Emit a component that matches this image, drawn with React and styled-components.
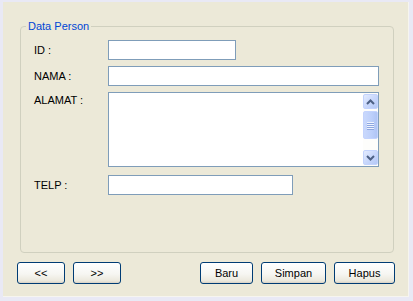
import React from "react";
import styled, { createGlobalStyle } from "styled-components";

const Global = createGlobalStyle`
  html, body { margin: 0; padding: 0; }
  body {
    background: #e9e9f5;
    font-family: "Liberation Sans", Arial, sans-serif;
    font-size: 11px;
    color: #000;
    width: 413px;
    height: 301px;
    overflow: hidden;
  }
`;

const Frame = styled.div`
  padding: 2px 4px 4px 3px;
  width: 413px;
  height: 301px;
  box-sizing: border-box;
`;

const Panel = styled.div`
  box-sizing: border-box;
  height: 295px;
  background: #ece9d8;
  border-right: 1px solid #f6f5ef;
  border-bottom: 1px solid #f6f5ef;
  padding: 18px 13px 12px 14px;
  display: flex;
  flex-direction: column;
  gap: 9px;
`;

const Group = styled.fieldset`
  flex: 1;
  margin: 0 1px 0 3px;
  padding: 7px 15px 0 13px;
  border: 1px solid #d0d0bf;
  border-radius: 4px;
  min-width: 0;
  display: grid;
  grid-template-columns: 74px 1fr;
  grid-auto-rows: min-content;
  row-gap: 6px;
  align-content: start;
`;

const Title = styled.legend`
  margin-left: -8px;
  padding: 0 2px;
  color: #0046d5;
  font-size: 11px;
  line-height: 13px;
`;

const Label = styled.label`
  align-self: ${(p) => (p.$top ? "start" : "center")};
  padding-top: ${(p) => (p.$top ? "2px" : "0")};
  margin-top: ${(p) => p.$mt || 0}px;
  line-height: 13px;
`;

const Input = styled.input`
  box-sizing: border-box;
  width: ${(p) => p.$w}px;
  height: 20px;
  margin: ${(p) => p.$mt || 0}px 0 0 0;
  border: 1px solid #7f9db9;
  background: #fff;
  padding: 1px 3px;
  font: inherit;
  outline: none;
`;

const AreaBox = styled.div`
  box-sizing: border-box;
  width: 271px;
  height: 75px;
  border: 1px solid #7f9db9;
  background: #fff;
  display: flex;
`;

const Area = styled.textarea`
  flex: 1;
  border: none;
  resize: none;
  outline: none;
  font: inherit;
  padding: 2px 3px;
  background: transparent;
  overflow: hidden;
`;

const ScrollBar = styled.div`
  width: 15px;
  padding: 1px 0;
  display: flex;
  flex-direction: column;
  background: #fdfdfb;
`;

const SBtn = styled.div`
  box-sizing: border-box;
  height: 15px;
  border: 1px solid #c3d3fd;
  border-radius: 2px;
  background: linear-gradient(135deg, #e3ebfe 0%, #c9d8fc 50%, #b4c8f6 100%);
  display: flex;
  align-items: center;
  justify-content: center;
`;

const Thumb = styled.div`
  box-sizing: border-box;
  height: 28px;
  margin-top: 2px;
  border: 1px solid #c3d3fd;
  border-radius: 2px;
  background: linear-gradient(90deg, #c9d8fc 0%, #bccffa 60%, #b0c5f5 100%);
  display: flex;
  flex-direction: column;
  align-items: center;
  justify-content: center;
  gap: 1px;
`;

const Grip = styled.span`
  display: block;
  width: 7px;
  height: 1px;
  background: #eef3fe;
  box-shadow: 0 1px 0 #8ca6e0;
`;

const Track = styled.div`
  flex: 1;
`;

const Buttons = styled.div`
  display: flex;
  gap: 8px;
  height: 22px;
`;

const Spacer = styled.div`
  flex: 1;
`;

const Button = styled.button`
  box-sizing: border-box;
  width: ${(p) => p.$w}px;
  height: 22px;
  padding: 0;
  border: 1px solid #003c74;
  border-radius: 3px;
  background: linear-gradient(180deg, #ffffff 0%, #f6f6f2 55%, #ebe8dc 90%, #d6d0c5 100%);
  font-family: "Liberation Sans", Arial, sans-serif;
  font-size: 11px;
  color: #000;
`;

const Up = () => (
  <svg width="9" height="6" viewBox="0 0 9 6">
    <path d="M1 5 L4.5 1.5 L8 5" fill="none" stroke="#4d6185" strokeWidth="2" />
  </svg>
);
const Down = () => (
  <svg width="9" height="6" viewBox="0 0 9 6">
    <path d="M1 1 L4.5 4.5 L8 1" fill="none" stroke="#4d6185" strokeWidth="2" />
  </svg>
);

export default function App() {
  return (
    <>
      <Global />
      <Frame>
        <Panel>
          <Group>
            <Title>Data Person</Title>
            <Label>ID :</Label>
            <Input $w={128} />
            <Label>NAMA :</Label>
            <Input $w={271} />
            <Label $top>ALAMAT :</Label>
            <AreaBox>
              <Area />
              <ScrollBar>
                <SBtn><Up /></SBtn>
                <Thumb>
                  <Grip />
                  <Grip />
                  <Grip />
                  <Grip />
                </Thumb>
                <Track />
                <SBtn><Down /></SBtn>
              </ScrollBar>
            </AreaBox>
            <Label $mt={2}>TELP :</Label>
            <Input $w={185} $mt={2} />
          </Group>
          <Buttons>
            <Button $w={48}>&lt;&lt;</Button>
            <Button $w={48}>&gt;&gt;</Button>
            <Spacer />
            <Button $w={53}>Baru</Button>
            <Button $w={65}>Simpan</Button>
            <Button $w={61}>Hapus</Button>
          </Buttons>
        </Panel>
      </Frame>
    </>
  );
}
